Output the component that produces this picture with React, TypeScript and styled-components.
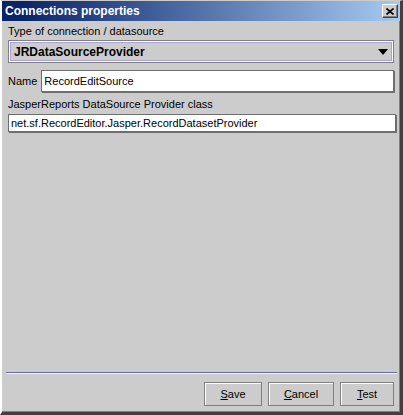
import React from "react";
import styled, { createGlobalStyle } from "styled-components";

const GlobalStyle = createGlobalStyle`
    html, body {
        margin: 0;
        padding: 0;
        background: #cccccc;
    }
    * {
        box-sizing: border-box;
    }
`;

const Window = styled.div`
    width: 403px;
    height: 415px;
    display: flex;
    flex-direction: column;
    background-color: #cccccc;
    border-style: solid;
    border-width: 1px 3px 3px 2px;
    border-color: #cccccc #404040 #404040 #ffffff;
    box-shadow: inset -1px -1px 0 #808080;
    font-family: "Liberation Sans", Arial, sans-serif;
    font-size: 11px;
    color: #000;
`;

const TitleBar = styled.div`
    height: 20px;
    display: flex;
    align-items: center;
    justify-content: space-between;
    padding: 0 2px 0 3px;
    background: linear-gradient(to right, #0a246a 5%, #a6caf0);
    color: #fff;
    font-weight: bold;
    font-size: 12px;
`;

const CloseButton = styled.button`
    width: 16px;
    height: 14px;
    padding: 0;
    display: flex;
    align-items: center;
    justify-content: center;
    background-color: #cccccc;
    border-style: solid;
    border-width: 1px;
    border-color: #ffffff #404040 #404040 #ffffff;
    box-shadow: inset -1px -1px 0 #808080;
`;

const Body = styled.div`
    flex: 1;
    display: flex;
    flex-direction: column;
    padding: 3px 6px 6px 6px;
`;

const Label = styled.div<{ $top?: number }>`
    line-height: 14px;
    margin-top: ${(p) => p.$top ?? 0}px;
    white-space: nowrap;
`;

const Combo = styled.div`
    margin-top: 2px;
    height: 23px;
    display: flex;
    align-items: center;
    justify-content: space-between;
    padding: 0 5px 0 5px;
    border: 1px solid #808080;
    box-shadow: inset 0 0 0 1px #ffffff, inset 0 0 0 2px #a8a2d8;
    font-size: 12px;
    font-weight: bold;
`;

const Arrow = styled.span`
    width: 0;
    height: 0;
    border-left: 5.5px solid transparent;
    border-right: 5.5px solid transparent;
    border-top: 6px solid #000;
`;

const Row = styled.div`
    margin-top: 7px;
    display: flex;
    align-items: center;
    gap: 4px;
`;

const Field = styled.input<{ $height: number }>`
    flex: 1;
    min-width: 0;
    height: ${(p) => p.$height}px;
    padding: 0 2px;
    background: #fff;
    border: 1px solid #6e6e6e;
    box-shadow: 1px 1px 0 #6e6e6e;
    font-family: "Liberation Sans", Arial, sans-serif;
    font-size: 11px;
    color: #000;
    outline: none;
`;

const ClassField = styled(Field)`
    flex: none;
    width: calc(100% + 2px);
    margin-top: 3px;
`;

const Spacer = styled.div`
    flex: 1;
`;

const Separator = styled.div`
    height: 2px;
    margin: 0 -3px 0 -2px;
    border-top: 1px solid #6c6cac;
    border-bottom: 1px solid #f4f4fa;
`;

const ButtonBar = styled.div`
    margin-top: 8px;
    display: flex;
    justify-content: flex-end;
    gap: 6px;
`;

const Button = styled.button<{ $width: number }>`
    width: ${(p) => p.$width}px;
    height: 24px;
    padding: 0;
    background-color: #cccccc;
    border: 1px solid #7f7f7f;
    box-shadow: inset 1px 1px 0 #ffffff;
    font-family: "Liberation Sans", Arial, sans-serif;
    font-size: 11px;
    color: #000;
`;

const CloseGlyph = () => (
    <svg width="8" height="7" viewBox="0 0 8 7">
        <path d="M0.5 0.5 L7.5 6.5 M7.5 0.5 L0.5 6.5" stroke="#000" strokeWidth="1.7" fill="none" />
    </svg>
);

export default function App() {
    return (
        <>
            <GlobalStyle />
            <Window>
                <TitleBar>
                    <span>Connections properties</span>
                    <CloseButton aria-label="Close">
                        <CloseGlyph />
                    </CloseButton>
                </TitleBar>
                <Body>
                    <Label>Type of connection / datasource</Label>
                    <Combo>
                        <span>JRDataSourceProvider</span>
                        <Arrow />
                    </Combo>
                    <Row>
                        <span>Name</span>
                        <Field $height={22} readOnly defaultValue="RecordEditSource" />
                    </Row>
                    <Label $top={5}>JasperReports DataSource Provider class</Label>
                    <ClassField
                        $height={18}
                        readOnly
                        defaultValue="net.sf.RecordEditor.Jasper.RecordDatasetProvider"
                    />
                    <Spacer />
                    <Separator />
                    <ButtonBar>
                        <Button $width={58}><u>S</u>ave</Button>
                        <Button $width={66}><u>C</u>ancel</Button>
                        <Button $width={54}><u>T</u>est</Button>
                    </ButtonBar>
                </Body>
            </Window>
        </>
    );
}
